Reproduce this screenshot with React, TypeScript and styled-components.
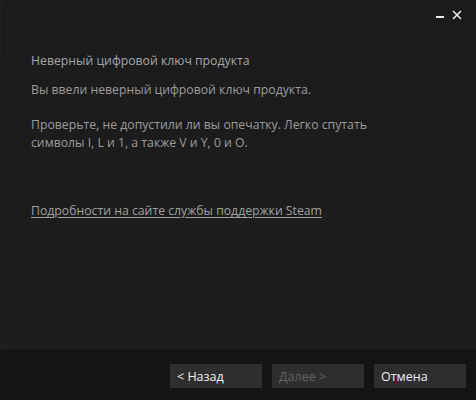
import React from 'react';
import styled, { createGlobalStyle } from 'styled-components';

const GlobalStyle = createGlobalStyle`
  html, body { margin: 0; padding: 0; background: #141414; }
  body { font-family: "Open Sans", "Noto Sans", sans-serif; }
`;

const Window = styled.div`
  width: 476px;
  height: 400px;
  display: flex;
  flex-direction: column;
  background: #141414;
  overflow: hidden;
`;

const Main = styled.div`
  flex: 1;
  display: flex;
  flex-direction: column;
  background: linear-gradient(#1b1b1b, #1d1d1d);
  border-left: 1px solid #202020;
`;

const TitleBar = styled.div`
  height: 30px;
  display: flex;
  justify-content: flex-end;
  align-items: center;
  padding-right: 14px;
  gap: 7px;
`;

const WinButton = styled.button`
  background: none;
  border: none;
  padding: 0;
  width: 10px;
  height: 10px;
  display: flex;
  align-items: center;
  justify-content: center;
  color: #e8e8e8;
  cursor: pointer;
`;

const Content = styled.div`
  padding: 22px 30px 0 30px;
  display: flex;
  flex-direction: column;
`;

const Heading = styled.div`
  font-size: 12.25px;
  color: #a6a6a6;
  line-height: 18px;
  margin-bottom: 11px;
`;

const Paragraph = styled.p`
  margin: 0 0 17px;
  font-size: 12.25px;
  color: #9c9c9c;
  line-height: 18px;
`;

const SupportLink = styled.a`
  margin-top: 33px;
  font-size: 12.25px;
  line-height: 18px;
  color: #a0a0a0;
  text-decoration: underline;
  text-underline-offset: 2px;
  cursor: pointer;
  align-self: flex-start;
`;

const Footer = styled.div`
  height: 50px;
  box-sizing: border-box;
  display: flex;
  justify-content: flex-end;
  align-items: flex-start;
  gap: 10px;
  padding: 14px 10px 0 0;
  background: #141414;
`;

const NavButton = styled.button<{ $disabled?: boolean }>`
  width: 92px;
  height: 24px;
  border: none;
  background: #2e2e2e;
  color: ${(p) => (p.$disabled ? '#636363' : '#f0f0f0')};
  font-family: inherit;
  font-size: 12.5px;
  text-align: left;
  padding: 0 7px;
  cursor: ${(p) => (p.$disabled ? 'default' : 'pointer')};
`;

const App: React.FC = () => {
  return (
    <>
      <GlobalStyle />
      <Window>
        <Main>
          <TitleBar>
            <WinButton aria-label="Свернуть">
              <svg width="8" height="10" viewBox="0 0 8 10">
                <rect x="0" y="6" width="8" height="2" fill="currentColor" />
              </svg>
            </WinButton>
            <WinButton aria-label="Закрыть">
              <svg width="10" height="10" viewBox="0 0 10 10" stroke="currentColor" strokeWidth="1.6">
                <line x1="1" y1="1" x2="9" y2="9" />
                <line x1="9" y1="1" x2="1" y2="9" />
              </svg>
            </WinButton>
          </TitleBar>
          <Content>
            <Heading>Неверный цифровой ключ продукта</Heading>
            <Paragraph>Вы ввели неверный цифровой ключ продукта.</Paragraph>
            <Paragraph>
              Проверьте, не допустили ли вы опечатку. Легко спутать
              <br />
              символы I, L и 1, а также V и Y, 0 и O.
            </Paragraph>
            <SupportLink>Подробности на сайте службы поддержки Steam</SupportLink>
          </Content>
        </Main>
        <Footer>
          <NavButton>&lt; Назад</NavButton>
          <NavButton $disabled>Далее &gt;</NavButton>
          <NavButton>Отмена</NavButton>
        </Footer>
      </Window>
    </>
  );
};

export default App;
